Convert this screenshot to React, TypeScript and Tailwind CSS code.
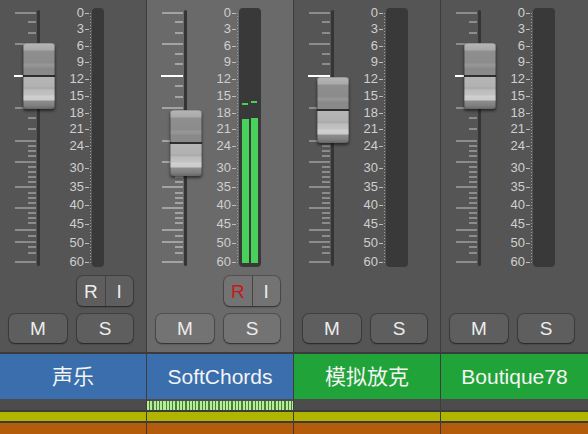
import React from 'react';

type Strip = {
  name: string;
  color: string;
  fader: number;
  stereo: boolean;
  ri: boolean;
  recArmed?: boolean;
  selected?: boolean;
  levels?: { top: number; peak: number }[];
  stripes?: boolean;
};

const STRIPS: Strip[] = [
  { name: '声乐', color: 'bg-[#3a6ead]', fader: 43, stereo: false, ri: true },
  {
    name: 'SoftChords',
    color: 'bg-[#3a6ead]',
    fader: 110,
    stereo: true,
    ri: true,
    recArmed: true,
    selected: true,
    levels: [
      { top: 119, peak: 103 },
      { top: 118, peak: 101 },
    ],
    stripes: true,
  },
  { name: '模拟放克', color: 'bg-[#20a338]', fader: 77, stereo: true, ri: false },
  { name: 'Boutique78', color: 'bg-[#20a338]', fader: 43, stereo: true, ri: false },
];

const SCALE = [
  ['0', 13], ['3', 29], ['6', 46], ['9', 62], ['12', 79], ['15', 96], ['18', 113], ['21', 129],
  ['24', 146], ['30', 168], ['35', 187], ['40', 205], ['45', 224], ['50', 243], ['60', 262],
] as const;

const LONG_TICKS = [13, 44, 108, 141, 162, 187, 208, 230, 242, 262];
const SHORT_TICKS = [
  22, 33, 54, 64, 86, 97, 118, 129, 146, 151, 156, 167, 172, 177, 182, 193, 198, 203, 213, 218,
  223, 236, 247, 253,
];

const font = { fontFamily: '"Liberation Sans", "Noto Sans CJK SC", sans-serif' };

function FaderCap({ top }: { top: number }) {
  return (
    <div
      className="absolute left-[23px] w-[32px] h-[66px] rounded-[3px] bg-[linear-gradient(to_bottom,#7c7c7c_0px,#b4b4b4_1px,#a9a9a9_7px,#8f8f8f_8px,#8b8b8b_20px,#979797_21px,#929292_24px,#898989_25px,#8a8a8a_32px,#2f2f2f_32px,#2f2f2f_34px,#b6b6b6_34px,#b1b1b1_44px,#a6a6a6_45px,#bcbcbc_47px,#c2c2c2_52px,#d0d0d0_53px,#cbcbcb_57px,#8e8e8e_58px,#7d7d7d_63px,#666666_66px)] shadow-[inset_1px_0_0_rgba(0,0,0,0.25),inset_-1px_0_0_rgba(0,0,0,0.25),0_2px_3px_rgba(0,0,0,0.55)]"
      style={{ top }}
    />
  );
}

function Button({ children, selected, className }: { children: React.ReactNode; selected?: boolean; className: string }) {
  return (
    <div
      className={`flex items-center justify-center rounded-[6px] text-[19px] leading-none text-[#ececec] shadow-[0_0_0_1px_rgba(0,0,0,0.22),0_1px_2px_rgba(0,0,0,0.45)] ${
        selected ? 'bg-[#737373]' : 'bg-[#5e5e5e]'
      } ${className}`}
    >
      {children}
    </div>
  );
}

function ChannelStrip({ s }: { s: Strip }) {
  const tickColor = s.selected ? 'bg-[#a3a3a3]' : 'bg-[#8c8c8c]';
  return (
    <div className={`h-[352px] flex flex-col ${s.selected ? 'bg-[#6a6a6a]' : 'bg-[#555555]'}`}>
      <div className="relative h-[272px]">
        {/* fader slot */}
        <div className="absolute left-[37px] top-[10px] w-[3px] h-[256px] rounded-full bg-[#353535]" />
        {LONG_TICKS.map((y) => (
          <div key={`l${y}`} className={`absolute left-[15px] w-[21px] h-[2px] ${tickColor}`} style={{ top: y - 1 }} />
        ))}
        {SHORT_TICKS.map((y) => (
          <div key={`s${y}`} className={`absolute left-[28px] w-[8px] h-[2px] ${tickColor}`} style={{ top: y - 1 }} />
        ))}
        <div className="absolute left-[14px] top-[75px] w-[22px] h-[2px] bg-white" />
        <FaderCap top={s.fader} />

        {/* meter scale */}
        {SCALE.map(([label, y]) => (
          <React.Fragment key={label}>
            <div
              className="absolute left-[54px] w-[30px] h-4 leading-4 text-right text-[13px] text-[#cfcfcf]"
              style={{ top: y - 8 }}
            >
              {label}
            </div>
            <div className="absolute left-[85px] w-[4px] h-px bg-[#bdbdbd]" style={{ top: y }} />
          </React.Fragment>
        ))}
        <div className="absolute left-[90px] top-[13px] w-px h-[250px] bg-[repeating-linear-gradient(to_bottom,#9a9a9a_0px,#9a9a9a_1px,transparent_1px,transparent_3px)]" />

        {/* meter */}
        <div
          className={`absolute left-[92px] top-[8px] h-[259px] rounded-[4px] bg-[#393939] ${
            s.stereo ? 'w-[22px]' : 'w-[12px]'
          }`}
        >
          {s.levels?.map((lv, i) => (
            <React.Fragment key={i}>
              <div
                className="absolute w-[7px] bg-[#48d25c]"
                style={{ left: 3 + i * 9, top: lv.top - 8, height: 263 - lv.top }}
              />
              <div
                className="absolute w-[6px] h-[2px] bg-[#48d25c]"
                style={{ left: 3 + i * 9, top: lv.peak - 8 }}
              />
            </React.Fragment>
          ))}
        </div>
      </div>

      <div className="h-[42px] pl-[77px] pt-[4px]">
        {s.ri && (
          <div
            className={`flex w-[56px] h-[30px] rounded-[6px] text-[19px] leading-none shadow-[0_0_0_1px_rgba(0,0,0,0.22),0_1px_2px_rgba(0,0,0,0.45)] ${
              s.selected ? 'bg-[#737373]' : 'bg-[#5e5e5e]'
            }`}
          >
            <div
              className={`flex-1 flex items-center justify-center border-r border-[#444] ${
                s.recArmed ? 'text-[#c81818]' : 'text-[#ececec]'
              }`}
            >
              R
            </div>
            <div className="flex-1 flex items-center justify-center text-[#ececec]">I</div>
          </div>
        )}
      </div>

      <div className="flex pl-[9px] gap-[10px]">
        <Button selected={s.selected} className="w-[58px] h-[29px]">
          M
        </Button>
        <Button selected={s.selected} className="w-[56px] h-[29px]">
          S
        </Button>
      </div>
    </div>
  );
}

function TrackFooter({ s }: { s: Strip }) {
  return (
    <div className="flex flex-col">
      <div className={`h-[45px] flex items-center justify-center text-[21px] text-[#f4f4f4] ${s.color}`}>
        {s.name}
      </div>
      <div className="h-[11px] bg-[#4c4c4c] pt-[2px]">
        {s.stripes && (
          <div className="h-[9px] bg-[repeating-linear-gradient(90deg,#b3ee98_0px,#b3ee98_2px,#4f7a3e_2px,#4f7a3e_3.3px)]" />
        )}
      </div>
      <div className="h-[2px] bg-[#3c3c3c]" />
      <div className="h-[9px] bg-[#b2b500]" />
      <div className="h-[2px] bg-[#3c3c3c]" />
      <div className="h-[11px] bg-[#b55c0c]" />
    </div>
  );
}

export default function App() {
  return (
    <div className="w-[588px] h-[434px] overflow-hidden bg-[#3d3d3d] flex flex-col" style={font}>
      <div className="grid grid-cols-[146px_146px_146px_1fr] gap-px">
        {STRIPS.map((s) => (
          <ChannelStrip key={s.name} s={s} />
        ))}
      </div>
      <div className="h-[2px] bg-[#3b3b3b]" />
      <div className="grid grid-cols-[146px_146px_146px_1fr] gap-px">
        {STRIPS.map((s) => (
          <TrackFooter key={s.name} s={s} />
        ))}
      </div>
    </div>
  );
}
